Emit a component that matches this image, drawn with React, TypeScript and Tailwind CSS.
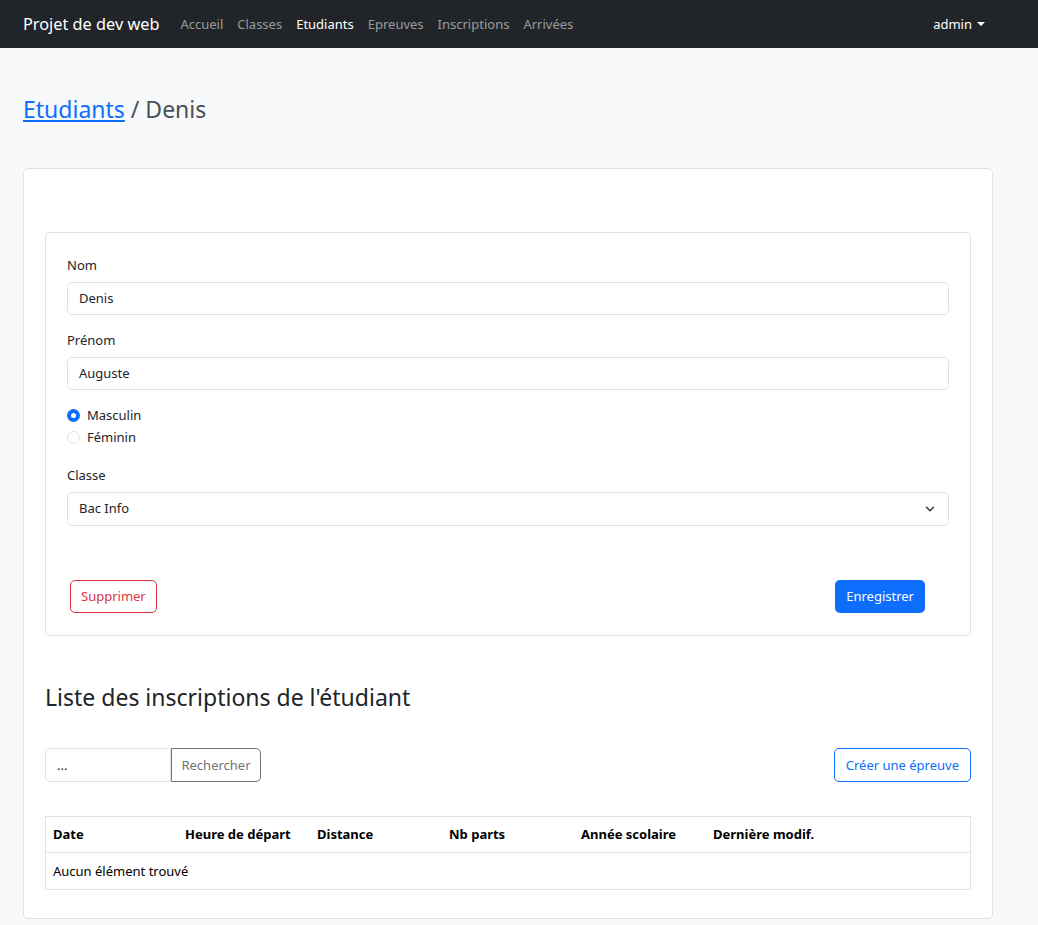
import { ChevronDown } from 'lucide-react';

const font = { fontFamily: '"Noto Sans", "Liberation Sans", sans-serif' };

export default function App() {
  const links = ['Accueil', 'Classes', 'Etudiants', 'Epreuves', 'Inscriptions', 'Arrivées'];
  const cols = ['Date', 'Heure de départ', 'Distance', 'Nb parts', 'Année scolaire', 'Dernière modif.', ''];

  return (
    <div className="min-h-[925px] bg-[#f8f9fa] text-[13px] leading-[21px] text-[#212529]" style={font}>
      {/* navbar */}
      <nav className="h-[48px] bg-[#212529] flex items-center px-[23px]">
        <span className="text-[16.3px] text-white mr-[21px]">Projet de dev web</span>
        <div className="flex gap-[14px]">
          {links.map((l) => (
            <span key={l} className={l === 'Etudiants' ? 'text-white' : 'text-[#ffffff8c]'}>{l}</span>
          ))}
        </div>
        <div className="ml-auto mr-[30px] flex items-center gap-[5px] text-white">
          admin
          <span className="w-0 h-0 border-x-[4px] border-x-transparent border-t-[4px] border-t-white" />
        </div>
      </nav>

      <div className="px-[23px] pt-[48px] w-[1016px]">
        <h3 className="text-[23px] leading-[1.2] text-[#495057]">
          <a className="text-[#0d6efd] underline">Etudiants</a> / Denis
        </h3>

        <div className="mt-[44px] bg-white border border-[#dee2e6] rounded-[5px] px-[21px] pt-[63px] pb-[28px]">
          {/* form card */}
          <div className="border border-[#dee2e6] rounded-[5px] px-[21px] pt-[22px] pb-[22px]">
            <label className="block mb-[6px]">Nom</label>
            <div className="h-[33px] border border-[#dee2e6] rounded-[5px] px-[11px] flex items-center">Denis</div>

            <label className="block mt-[15px] mb-[6px]">Prénom</label>
            <div className="h-[33px] border border-[#dee2e6] rounded-[5px] px-[11px] flex items-center">Auguste</div>

            <div className="mt-[14px] flex flex-col">
              <div className="flex items-center gap-[7px] h-[23px]">
                <span className="w-[13px] h-[13px] rounded-full bg-[#0d6efd] flex items-center justify-center">
                  <span className="w-[5px] h-[5px] rounded-full bg-white" />
                </span>
                Masculin
              </div>
              <div className="flex items-center gap-[7px] h-[21px]">
                <span className="w-[13px] h-[13px] rounded-full border border-[#dee2e6]" />
                Féminin
              </div>
            </div>

            <label className="block mt-[17px] mb-[6px]">Classe</label>
            <div className="h-[34px] border border-[#dee2e6] rounded-[5px] pl-[11px] pr-[11px] flex items-center justify-between">
              Bac Info
              <ChevronDown size={14} strokeWidth={2.5} className="text-[#343a40]" />
            </div>

            <div className="mt-[54px] flex justify-between pl-[3px] pr-[24px]">
              <button className="h-[33px] px-[10px] border border-[#dc3545] text-[#dc3545] rounded-[5px]">Supprimer</button>
              <button className="h-[33px] px-[11px] bg-[#0d6efd] text-white rounded-[5px]">Enregistrer</button>
            </div>
          </div>

          <h3 className="mt-[48px] text-[23px] leading-[1.2]">Liste des inscriptions de l'étudiant</h3>

          <div className="mt-[37px] flex justify-between items-center">
            <div className="flex h-[34px]">
              <div className="w-[126px] border border-[#dee2e6] rounded-l-[5px] px-[11px] flex items-center text-[#212529]">...</div>
              <button className="w-[90px] border border-[#6c757d] text-[#6c757d] rounded-r-[5px]">Rechercher</button>
            </div>
            <button className="h-[34px] px-[11px] border border-[#0d6efd] text-[#0d6efd] rounded-[5px]">Créer une épreuve</button>
          </div>

          <div className="mt-[34px] border border-[#dee2e6]">
            <div className="grid grid-cols-7 h-[36px] items-center border-b border-[#dee2e6] font-bold text-black">
              {cols.map((c, i) => (
                <div key={i} className="px-[7px] whitespace-nowrap">{c}</div>
              ))}
            </div>
            <div className="h-[36px] flex items-center px-[7px] text-black">Aucun élément trouvé</div>
          </div>
        </div>
      </div>
    </div>
  );
}
